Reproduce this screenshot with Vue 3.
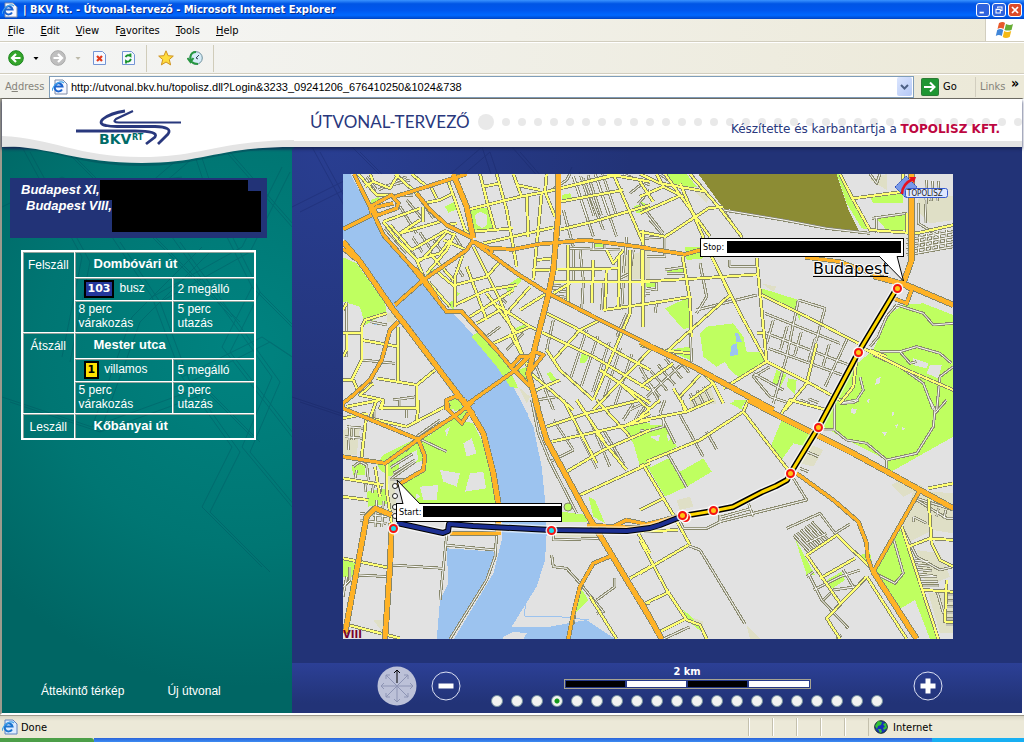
<script setup>
import { ref } from 'vue'

const address = ref('http://utvonal.bkv.hu/topolisz.dll?Login&3233_09241206_676410250&1024&738')
const zoomLevel = ref(4)
const menus = ['File', 'Edit', 'View', 'Favorites', 'Tools', 'Help']
const accessKeys = [0, 0, 0, 1, 0, 0]

// n parallel street segments, each shifted by (dx, dy)
const hatch = (x1, y1, x2, y2, dx, dy, n) =>
  Array.from({ length: n }, (_, i) => `M${x1 + dx * i} ${y1 + dy * i} ${x2 + dx * i} ${y2 + dy * i}`).join('')

// The city map is kept in four sheets, each drawn at three units per map pixel
const sheets = [
  {
    at: 'translate(340 170) scale(.33333)',
    water: 'M9 12H32L95 135 135 200 215 290 320 430 340 430 400 495 470 565 520 650 565 735 385 735 200 480 160 410 9 205Z',
    sand: 'M845 260 930 240 930 330 850 325ZM535 650 570 680 560 700ZM140 430 165 430 165 460 140 455Z',
    green: 'M9 262 50 280 135 400 140 430 75 465 60 410 9 395ZM395 500 410 488 450 515 500 580 535 655 510 650 470 590ZM392 118 445 112 458 182 405 188ZM315 110 345 94 352 118 325 128ZM92 90 118 80 120 95 95 100ZM255 315 280 295 285 310 265 325ZM495 350 540 320 550 325 515 365 510 380ZM525 475 560 460 565 475 535 488ZM665 75 690 70 700 92 665 96ZM880 110 910 98 920 130 890 130ZM755 215 790 215 790 232 760 232ZM725 550 740 542 750 555 735 580 718 580ZM620 610 632 605 650 630 635 635ZM530 600 565 590 565 640ZM325 400 340 390 345 430ZM325 690 350 682 365 712 330 720ZM345 365 360 370 345 385Z',
    land: 'M405 135 420 125 440 135 442 165 425 175 408 160Z',
    pond: 'M102 455H118V466H102Z',
    minor: 'M20 395V560M65 570 165 580M700 20 760 200M730 25 790 180M765 12 830 200M670 120 700 230M850 12 930 45M870 70 920 30M860 200 850 310M880 240 870 310 840 325M690 235 840 240M720 240 730 330M140 50 210 30M115 60 200 20M150 80 220 75M135 175 200 250M200 90 250 150M180 110 230 190M250 100 280 145M590 690 650 680M640 450 620 540M860 430 830 500M700 240V330M580 570 610 640M440 500 480 470M480 380 500 400M140 465 90 455M160 690 230 680M895 100 930 60M915 340V380M600 620 640 720M915 370H930M345 200 370 240M280 210 310 250M550 490 500 540M350 290 370 320M80 20 110 60M635 60 680 30 690 12M640 125H660M640 210H660M760 210V240M795 210V240'
      + hatch(740, 480, 690, 630, 34, 18, 5) + hatch(640, 345, 680, 350, 0, 16, 3) + hatch(195, 215, 225, 260, 22, -14, 3) + hatch(700, 20, 740, 140, 22, -2, 5) + hatch(730, 340, 725, 420, 60, 0, 3),
    yellow: 'M55 12 110 75 160 75M75 50 100 35 90 12M100 35 150 55 175 12M165 12 230 70 250 100 300 90 340 70M215 12 255 45M270 45 290 85M325 35 345 90 375 180 395 200M250 110V155M130 155 240 115M130 155 180 220 230 270 255 330M180 190 300 155M150 165 215 240M185 220 235 275 250 265 320 185 345 195M215 240 320 180M240 150 180 190M230 270 300 250 330 210M345 190 320 240 260 310M400 230 480 390 550 560M370 250 345 320V410M380 290 440 450M345 345 440 320 480 275M345 405 440 360 530 345M390 440 520 360M265 335 330 410M285 300 345 350M420 12 440 90 465 180M380 120 540 80 620 65 840 12M470 12 500 120 530 290M530 45 600 60M430 50 480 40M400 185 520 175M430 220 650 170M520 12 545 80M560 75 565 200M605 70 580 330M620 12 615 65 645 140M660 95 850 60M655 180 760 155 930 105M660 55 830 12M800 12 930 35M820 12 910 220M590 270 640 265M575 300 840 295M640 335H930M685 225V400M760 270 755 400M800 240 820 280 850 240M800 300 795 420M838 260 835 410M870 240V430L760 690M905 240 910 450M790 420 930 400M640 370 690 340M620 430 700 470 820 540 930 600M540 420 620 370M500 430 570 350M440 370 530 490M460 520 570 470 760 560 930 660M410 460 480 420M510 490 570 600M470 405 570 470M620 540 660 600 760 690M560 600 620 650 700 720M590 660 660 630M640 570 720 480 780 450M760 720 930 540M780 600 930 700M840 640 930 720M65 470 75 450 140 430M65 470V570L35 630H9M9 490H65M65 510 175 530M175 470V640M110 625 230 645 285 600M230 645V720M100 640 60 675 130 690 125 720M40 630 55 665M290 140 320 165 350 160M270 250 340 330M310 210 380 240M20 400 9 420M9 560 20 540V490',
    orange: 'M42 12 100 130 130 195 215 290 320 425H365L410 475 475 545 520 600 570 650M9 178 95 135M165 80 260 50 380 12M230 70 270 120 320 165 400 205M400 210 380 240 250 330 165 405M400 215 450 235 520 238 600 222 740 210 930 235M455 235V250M400 215 530 310 625 370 780 450 930 525M9 235 50 270M175 455 150 480 125 570 90 630 40 675 9 700V720M385 700 520 605 560 565 585 545 610 555 570 605M95 130 90 110 155 75 175 100 170 115 100 140M105 112 160 100M320 720V690L345 680 375 690M515 590 540 560 570 560M530 605 560 640 580 650M210 285 240 310 290 380',
    major: 'M340 12 380 110 400 205M655 12V130L640 300 625 375 580 550 565 610 595 720M9 215 60 275 160 420 200 470 400 735M95 110 110 140',
  },
  {
    at: 'translate(640 170) scale(.33333)',
    sand: 'M840 60 940 80 940 150 870 160 830 120ZM150 680 210 650 230 700 150 715ZM365 340 410 350 400 365ZM690 30 740 12 740 60ZM160 60 210 70 200 100Z',
    green: 'M365 355 475 390 465 418 370 385ZM180 490 200 470 280 460 310 500 320 545 370 545 380 580 300 625 270 600 255 575 230 590 190 560ZM750 430 790 405 850 400 940 435V730H570L640 590 700 540ZM690 80 790 65V100H700ZM705 140 800 130V180H740ZM75 415 150 380 155 470 130 478ZM80 12H140L170 50 100 52ZM0 90 40 120 0 130ZM410 600 440 615 420 655 395 645ZM445 625 470 630 465 675 440 650ZM80 540 150 530V570ZM135 230H180L190 265 140 270ZM590 12 605 12 650 100 690 180 665 175 620 100ZM80 295H135V308H80ZM15 338H50V350H15ZM300 690 310 720 270 700ZM470 430 485 435 478 450Z',
    pond: 'M285 488 295 490 305 515 290 518ZM275 525 290 520 295 555 270 558Z',
    land: 'M820 565 865 580 860 595 820 585ZM870 585 905 585 895 625 860 610ZM710 625 722 620 720 640 705 645ZM680 690 690 685 685 700Z',
    olive: 'M175 12 250 115 660 190 625 120 590 12Z',
    minor: 'M0 100 70 190M250 120 430 150 560 175 690 190M15 205 75 200V260H20M180 280 200 380 170 430M270 270V290H355M170 420 350 375M475 390 440 560 400 700M475 390 555 415 510 580M375 430 600 520M380 490 640 590M385 535 620 620M340 610 430 660M620 510 555 650M695 145 800 130M710 140V190M835 100V160L900 200M150 470 155 575M0 590 60 700M20 680 140 570M45 430 50 400H0M75 300 140 290M770 405 850 430 880 465 940 460M770 405 740 440 715 500 690 530M720 545 780 545 830 530 900 550 935 580M780 545 810 580 830 575M700 555 780 590 850 640 880 720M660 620 670 660 650 690 600 700M940 590 900 620 890 720M85 30 60 12M30 150 65 190M250 120 310 210M690 12 710 40 720 12M390 590 340 620 390 680 450 700M830 70 860 65 855 160M20 355 50 360V335M80 310H135'
      + hatch(800, 210, 940, 185, 0, 15, 4) + hatch(840, 195, 835, 250, 20, -4, 5) + hatch(10, 620, 60, 680, 22, -18, 5) + hatch(400, 450, 380, 520, 42, 18, 5) + hatch(150, 670, 170, 710, 20, -10, 3) + hatch(860, 30, 855, 90, 18, 2, 3),
    yellow: 'M0 12 60 40 200 65M0 80 70 50 50 12M0 130 125 75M75 12 210 200M150 12 240 115 305 200M120 40 215 260 300 430 380 575M0 185 75 200 205 115 250 110M70 50 130 80M0 35 40 95M125 245 150 390 155 500M350 265 380 575M0 335 180 325 355 313M0 405 155 380M10 180V470M80 545 270 375 230 290M365 375 500 440 655 520M600 12 640 90 690 180 830 190 940 165M640 85 790 65V12M380 575 250 655M380 575 510 640 600 690M530 520 500 640 435 720M350 490H375M150 690 220 640 180 600M120 680 180 615M0 525 60 540 150 550M650 560 640 650 600 700M660 530 720 560 800 600 940 660M690 540 740 560M0 650 100 580M800 190V130M220 640 250 700M100 655 140 720',
    orange: 'M0 232 135 253 180 240M495 262 600 275 720 320M760 385 800 400 815 360 790 345',
    major: 'M700 318 800 345 940 405M815 12V270L790 340M0 515 160 590 400 720',
  },
  {
    at: 'translate(340 400) scale(.33333)',
    water: 'M390 0H540L580 80 605 200 615 300 620 400 615 480 590 560 540 640 515 680 630 680 740 660 830 720H340L400 620 460 520 485 420V310L460 200 430 90ZM320 445 465 455 455 510 400 600 330 720H290L300 600 325 550Z',
    sand: 'M9 90 60 80 50 165 9 165ZM140 200H160L170 330 155 340ZM100 660H130V700ZM640 395 780 390 770 410 650 412ZM800 500 830 470 810 490Z',
    green: 'M270 105 340 55 400 70 430 130 460 220 465 310H240L180 250 250 210 260 180 240 120ZM110 190 130 165 240 110 250 180 180 210 150 230 120 210ZM80 275 140 265 150 310 85 320ZM35 200 55 190 75 200V225H40ZM9 480 50 490 40 530H9ZM720 560 745 600 705 640ZM850 90 880 70 930 70V210L900 200 880 130ZM665 335 740 345V365H665ZM745 290 765 300 795 370 760 350ZM325 0H365V25L345 35ZM350 40 385 30 380 60 360 62Z',
    land: 'M370 130 395 115 410 160 380 170ZM300 210 360 220 350 260 310 245ZM390 220 430 215 438 265 375 275ZM240 260 295 255 290 300 250 300ZM490 710 520 695 560 700 550 717 490 717ZM180 180 230 150 235 180 175 215ZM315 90 330 80 320 110ZM230 280 240 290 225 300Z',
    minor: 'M30 75 25 150M245 120 320 155M155 235 225 185M195 155 230 110 300 60M150 240H200M155 495 310 505M55 525 145 530M320 405 300 600M315 435 465 450M470 405 465 470 440 540 330 717M575 0 595 100 630 185 710 340M710 85 770 205M750 60 810 200M790 90 850 190M640 400V420L780 415M635 465 640 500 680 505 720 550 790 635 770 640M770 600 825 560V535M9 590 20 530M705 640 700 670M640 60 700 150M870 30 930 0M20 80 75 85M15 110 70 115M40 85V120M10 560 30 540V500M850 60 880 12M630 185 700 150M40 200 60 185 80 195 85 240M180 0V30M200 20V55M105 30V60M50 210 45 235M900 30 880 70'
      + hatch(80, 240, 75, 275, 22, 4, 3) + hatch(110, 300, 105, 380, 20, 2, 2) + hatch(60, 340, 140, 350, 0, 20, 2) + hatch(160, 220, 225, 180, -8, -18, 2),
    yellow: 'M80 40 65 170M9 55 80 40M130 0 120 25 235 25 230 60M140 190V270L155 370M9 235 130 255M9 475 155 505M680 215 790 150 930 90M670 0 770 190M770 0 870 110M620 80 740 40 900 0M635 125 930 60M720 285 930 190M750 590 830 717M870 535 930 500M895 400 930 460M25 675 180 715M120 0 20 20M110 0 90 55 200 80 330 12M235 0V30M850 80 930 40M770 100 860 210M710 0 790 120M915 610H930M105 200 120 290M9 290 85 300',
    orange: 'M9 25 235 118M9 170 135 190 235 118 355 40 400 5M235 118 255 170 250 210 165 260M475 400H330M320 0 325 30 365 70 385 40M820 465 760 490 720 560 700 640 685 717M740 375 930 385M820 380 860 360 930 375',
    major: 'M15 700 80 350 105 325 155 345M155 370 150 500 135 717M370 0 430 100 460 220 475 310V405M585 0 620 120 740 340 930 655',
  },
  {
    at: 'translate(640 400) scale(.33333)',
    sand: 'M820 270 940 280V400L880 390 800 430 790 380ZM830 450 900 460 930 530 860 560ZM865 580H940V700H900ZM755 255 790 235 850 260 790 290ZM505 130 550 150 520 200 480 190ZM110 300 150 290 160 320 120 330ZM150 650 190 665 190 700ZM320 675 360 717 330 717Z',
    green: 'M0 75H80L110 140 20 190 0 180ZM25 205 85 175 120 215 190 175 215 215 140 260 75 290ZM425 60 535 110 500 140 460 130 425 180 390 145ZM575 20 600 0H940V110L745 220 740 180 620 120 550 80ZM465 415 525 525H500ZM650 470 690 455 700 510 670 490ZM705 520 760 420 785 385 895 717H870L825 600 775 630ZM560 540 605 515 615 540 575 567ZM130 630 155 650 190 700 140 660ZM280 0H320L300 30ZM515 430 525 428 528 440Z',
    land: 'M635 25 650 28 645 42 632 38ZM755 35 765 38 758 50ZM765 75 775 72 770 85ZM725 95 740 97 735 110ZM785 80 795 85 788 92ZM30 110 60 105 55 125ZM80 100 95 110 85 125Z',
    minor: 'M60 40 75 0M120 45 190 170M200 95 230 148M0 100 70 80V50M85 165 140 262M60 40 105 130M120 365 130 385 200 385 240 365 500 300 460 235M240 345V370M240 352 335 325M325 310 340 350M145 437 180 450 315 672M500 155 535 170M480 205 505 215M440 385 540 340 585 400M585 400 630 372M500 530 520 515M505 520 545 600 625 685M520 570 600 530 660 510M610 510 645 570M550 600 580 570 650 560M583 10V90L620 120 680 130 740 180 830 160 880 80 885 30 870 0M740 180V215M550 90H583M885 40 920 0M705 520 765 550 790 520 760 415M830 295 940 330M830 300 920 355H940M820 350 860 370M820 350V365M890 570 910 640M790 390 830 470 900 510 940 500M560 400 500 430M70 717 150 680M590 717 605 705M600 10 640 8 655 0M20 12 0 40M0 90 20 95'
      + hatch(460, 405, 510, 460, 11, -8, 6) + hatch(820, 480, 865, 485, 5, 14, 4) + hatch(840, 530, 890, 530, 3, 14, 3) + hatch(480, 0, 510, 12, 25, -4, 2) + hatch(918, 585, 940, 585, 0, 18, 6) + hatch(895, 325, 890, 350, 22, 6, 2),
    yellow: 'M0 62 140 35 220 0M20 185 180 120 310 35 325 0M310 35 460 230M0 200 10 195 100 345 150 435M0 330 70 295M0 520 145 435M0 420 80 570 140 660 180 675 200 717M15 610 90 575M60 695 140 655M500 465 590 405 700 510M500 465 600 610M540 535 645 475M680 530 560 655 600 717M680 530 800 717M425 40 450 0 560 30M785 380 895 717M805 440 870 415 940 420M940 250 865 265M865 290 875 430 900 480 940 500M850 570 940 575M920 540 915 665H940M0 395 115 390M125 0 135 35M60 0 0 50',
    orange: 'M470 220 580 300 655 365 680 430 682 470 700 520M840 270 700 515M0 378 128 345',
    major: 'M325 0 420 50 540 110 640 160 750 220 840 270 940 325M700 515 830 717M0 600 65 717',
  },
]
const areas = ['water', 'sand', 'green', 'land', 'pond', 'olive']
const roads = ['minor casing', 'minor', 'yellow casing', 'yellow', 'orange casing', 'major casing', 'orange', 'major']

const blueRoute = 'M397 523 443 533 448 531 449 524 473 526 551 530 627 531 650 528 660 525 683 516'
const yellowRoute = 'M683 516 713 511 733 507 762 492 776 486 787 480 790 474 818 428 858 353 897 288'
const stops = [[393, 528, 1], [551, 530, 1], [685, 517], [682, 515], [713, 510], [790, 473], [818, 427], [858, 352], [897, 288]]

const legs = [
  { action: 'Felszáll', place: 'Dombóvári út', line: '103', kind: 'busz', count: '2 megálló', wait: '8 perc', ride: '5 perc', tone: 'bus' },
  { action: 'Átszáll', place: 'Mester utca', line: '1', kind: 'villamos', count: '5 megálló', wait: '5 perc', ride: '9 perc', tone: 'tram' },
]

const streets = 'M0 60 60 30 120 60 190 0M20 0 80 110 60 210M190 0 210 60 250 140 290 180M110 90 150 150 240 100 280 20M150 150 180 230 260 190 290 210M170 90 270 230 240 300 290 360M100 40 230 170M200 100 130 170 90 280M0 250 90 280 200 240 250 290M180 230 230 300 200 360 260 420M60 0 100 40 180 30M220 0 290 80M250 140 220 200 290 290'
</script>

<template>
  <div class="window">
    <header class="titlebar">
      <svg class="ie" viewBox="0 0 16 16" aria-hidden="true"><path d="M3 1h8l4 4v10H3z" fill="#f7f8ff" stroke="#7c8ba9" /><path d="M10 10.500A4 4 0 1 1 10.500 7.500H3.500" fill="none" stroke="#1c64cf" stroke-width="2" /><path d="M0 12C1 5 9 1 12 4" fill="none" stroke="#41a3ec" stroke-width="1.200" /></svg>
      <h1>| BKV Rt. - Útvonal-tervező - Microsoft Internet Explorer</h1>
      <button class="wb" aria-label="Minimize"><svg viewBox="0 0 14 14"><path d="M3 10h5" stroke="#fff" stroke-width="2" /></svg></button>
      <button class="wb" aria-label="Restore"><svg viewBox="0 0 14 14"><path d="M5.500 5V3.500h5v4H9M3.500 6h5v4.500h-5zM3.500 6.500h5M5.500 3.500h5" fill="none" stroke="#fff" stroke-width="1.200" /></svg></button>
      <button class="wb close" aria-label="Close"><svg viewBox="0 0 14 14"><path d="m3.500 3.500 7 7m0-7-7 7" stroke="#fff" stroke-width="2" /></svg></button>
    </header>

    <nav class="menubar">
      <button v-for="(m, i) in menus" :key="m">{{ m.slice(0, accessKeys[i]) }}<u>{{ m[accessKeys[i]] }}</u>{{ m.slice(accessKeys[i] + 1) }}</button>
      <span class="flag">
        <svg viewBox="0 0 20 18" aria-hidden="true"><path d="M4 2q4-2 6 0L8.500 8q-3-2-6 0z" fill="#e8592b" /><path d="M11 3q4 2 7 0l-1.500 6q-4 1-7 0z" fill="#67ad35" /><path d="M2.200 9q3-2 6 0L6.800 15q-3-2-6 0z" fill="#4086d8" /><path d="M9.200 10q3 2 7 0l-1.500 6q-4 2-7 0z" fill="#f5b916" /></svg>
      </span>
    </nav>

    <div class="toolbar">
      <button aria-label="Back"><svg viewBox="0 0 16 16"><circle cx="8" cy="8" r="7.300" fill="#35a62b" stroke="#18831b" /><path d="M12.500 8H4.500M8 4 4 8l4 4" fill="none" stroke="#fff" stroke-width="2.200" /></svg></button>
      <button class="drop" aria-label="Back history"><svg viewBox="0 0 5 3"><path d="M0 0h5L2.500 3z" /></svg></button>
      <button aria-label="Forward"><svg viewBox="0 0 16 16"><circle cx="8" cy="8" r="7.300" fill="#bfbfbf" stroke="#a9a9a9" /><path d="M3.500 8h8M8 4l4 4-4 4" fill="none" stroke="#fff" stroke-width="2.200" /></svg></button>
      <button class="drop" aria-label="Forward history"><svg viewBox="0 0 5 3"><path d="M0 0h5L2.500 3z" fill="#bdbaaa" /></svg></button>
      <button class="gap" aria-label="Stop"><svg viewBox="0 0 16 16"><path d="M2.500 1.500h9l3 3v10h-12z" fill="#f5f8ff" stroke="#7395d4" /><path d="m6 6 5 5m0-5-5 5" stroke="#e23a1b" stroke-width="2.200" /></svg></button>
      <button class="gap" aria-label="Refresh"><svg viewBox="0 0 16 16"><path d="M2.500 1.500h9l3 3v10h-12z" fill="#f5f8ff" stroke="#7395d4" /><path d="M5.500 7q2-3 5-1V3.500M11 9q-2 4-5 2v2.500" fill="none" stroke="#18932b" stroke-width="1.800" /></svg></button>
      <i class="sep" />
      <button aria-label="Favorites"><svg viewBox="0 0 16 16"><path d="m8 .8 2.100 4.900 5.200.4-4 3.400 1.300 5.400L8 12l-4.600 2.900 1.300-5.400-4-3.400 5.200-.4z" fill="#ffdc3d" stroke="#cf9321" /></svg></button>
      <button class="gap" aria-label="History"><svg viewBox="0 0 16 16"><circle cx="9" cy="8" r="6.300" fill="#d5ecf7" stroke="#70909c" /><path d="M12 5 9 8l2 1" fill="none" stroke="#345" /><path d="M11 14Q3 14 3.500 7 4 2 9 2M.5 8l3 4 3-4" fill="none" stroke="#279741" stroke-width="2" /></svg></button>
      <i class="sep" />
    </div>

    <form class="addressbar" @submit.prevent>
      <label for="address">A<u>d</u>dress</label>
      <span class="field">
        <svg class="ie" viewBox="0 0 16 16" aria-hidden="true"><path d="M3 1h8l4 4v10H3z" fill="#f7f8ff" stroke="#7c8ba9" /><path d="M10 10.500A4 4 0 1 1 10.500 7.500H3.500" fill="none" stroke="#1c64cf" stroke-width="2" /><path d="M0 12C1 5 9 1 12 4" fill="none" stroke="#41a3ec" stroke-width="1.200" /></svg>
        <input id="address" v-model="address" type="text" spellcheck="false">
        <button type="button" class="open" aria-label="Recent addresses"><svg viewBox="0 0 9 6"><path d="m1 1 3.500 3.500L8 1" fill="none" stroke="#4d6185" stroke-width="2" /></svg></button>
      </span>
      <button class="go"><svg viewBox="0 0 18 18" aria-hidden="true"><rect x=".5" y=".5" width="17" height="17" rx="1" fill="#1f9632" stroke="#2c7a37" /><path d="M3 9h10M9 4.500 13.500 9 9 13.500" fill="none" stroke="#fff" stroke-width="2" /></svg>Go</button>
      <span class="links">Links</span>
      <button type="button" class="more" aria-label="More links">»</button>
    </form>

    <main class="page">
      <header class="banner">
        <svg class="swoosh" viewBox="0 0 292 70" aria-hidden="true">
          <path d="M0 47C50 49 75 67 140 67 200 67 215 50 292 50V42H0Z" fill="#044a58" opacity=".5" />
          <path d="M0 0H292V48C215 48 205 64 140 64 75 64 50 48 0 47Z" fill="#e4e4e4" />
          <path d="M0 0H292V41C215 42 200 58 140 58 75 58 50 39 0 37Z" fill="#fff" />
        </svg>
        <svg class="logo" viewBox="0 0 106 38" aria-label="BKV Rt.">
          <g fill="none" stroke="#29387d">
            <path d="M50 2Q36 4 28 10 23 15 31 16.500 35 17.500 42 17.500H80Q98 18 93 25L83 35" stroke-width="2.800" />
            <path d="M58 2 41 10Q37 13.500 44 13.500H106" stroke-width="2.200" />
            <path d="M1 22H60Q84 22 80 28L71 35" stroke-width="2.800" />
          </g>
          <text x="24" y="35" class="logo-name">BKV</text>
          <text x="57" y="31" class="logo-rt">RT</text>
        </svg>
        <h2>ÚTVONAL-TERVEZŐ</h2>
        <svg class="beads" width="100%" height="18" aria-hidden="true">
          <defs><pattern id="bead" x="20" width="16" height="18" patternUnits="userSpaceOnUse"><circle cx="8" cy="9" r="4" fill="#e9e9e9" /></pattern></defs>
          <circle cx="8" cy="9" r="8" fill="#e9e9e9" /><rect x="20" width="100%" height="18" fill="url(#bead)" />
        </svg>
        <p class="credit">Készítette és karbantartja a <a href="#">TOPOLISZ KFT.</a></p>
      </header>

      <aside class="side">
        <svg class="texture" viewBox="0 0 290 440" aria-hidden="true"><path :d="streets" /><path :d="streets" transform="translate(8 5)" /></svg>
        <section class="trip">
          <div class="from"><span>Budapest XI,</span><b /></div>
          <div class="to"><span>Budapest VIII,</span><b /></div>
        </section>
        <table>
          <colgroup><col class="c-action"><col class="c-line"><col></colgroup>
          <tbody v-for="l in legs" :key="l.action">
            <tr class="place"><th rowspan="3" scope="rowgroup">{{ l.action }}</th><td colspan="2">{{ l.place }}</td></tr>
            <tr class="line"><td><span class="badge" :class="l.tone">{{ l.line }}</span><span class="kind">{{ l.kind }}</span></td><td>{{ l.count }}</td></tr>
            <tr class="time"><td>{{ l.wait }}<br>várakozás</td><td>{{ l.ride }}<br>utazás</td></tr>
          </tbody>
          <tbody><tr class="place"><th scope="row">Leszáll</th><td colspan="2">Kőbányai út</td></tr></tbody>
        </table>
        <footer><a href="#">Áttekintő térkép</a><a href="#">Új útvonal</a></footer>
      </aside>

      <section class="stage">
        <svg class="texture" viewBox="0 0 290 440" aria-hidden="true"><path :d="streets" /><path :d="streets" transform="translate(8 5)" /></svg>
        <svg class="map" viewBox="343 174 610 465" role="img" aria-label="Budapest">
          <rect x="343" y="174" width="610" height="465" fill="#e2e2e2" />
          <g shape-rendering="crispEdges">
            <g v-for="a in areas" :key="a"><path v-for="(s, i) in sheets" :key="i" :transform="s.at" :d="s[a]" :class="a" /></g>
            <path d="M524 616 562 617 589 620M524 616 527 595 535 575" fill="none" stroke="#9cc3ef" />
            <g v-for="r in roads" :key="r"><path v-for="(s, i) in sheets" :key="i" :transform="s.at" :d="s[r.split(' ')[0]]" class="road" :class="r" /></g>
          </g>
          <circle cx="568" cy="507" r="4" fill="#bfff60" stroke="#86866a" />
          <text x="343" y="638" class="district">VIII</text>
          <g class="route">
            <path :d="blueRoute" class="halo" /><path :d="yellowRoute" class="halo" />
            <path :d="blueRoute" class="edge" /><path :d="blueRoute" class="bus-line" />
            <path :d="yellowRoute" class="edge" /><path :d="yellowRoute" class="tram-line" />
          </g>
          <circle v-for="y in [486, 496, 507, 516]" :key="y" cx="395" :cy="y" r="2.500" fill="#fff" stroke="#222" />
          <g v-for="(s, i) in stops" :key="'s' + i">
            <circle :cx="s[0] + .5" :cy="s[1] + .5" r="6" fill="#fff" opacity=".85" />
            <circle :cx="s[0] + .5" :cy="s[1] + .5" r="3.500" :fill="s[2] ? '#19dbe9' : '#ffc414'" stroke="#f51212" stroke-width="2" />
          </g>
          <text x="813" y="274" class="city">Budapest</text>
          <path d="M813 276.500H888" stroke="#000" />
          <g class="callout">
            <rect x="700.500" y="238.500" width="203" height="18" /><path d="M879 256 903.500 281 897 256" /><path d="M880.500 256H896.500" class="erase" />
            <rect x="727" y="241" width="174" height="12" class="hidden-name" /><text x="703" y="250">Stop:</text>
            <rect x="396.500" y="503.500" width="165" height="18" /><path d="M403 504 397 480 420 504" /><path d="M404 504H419" class="erase" />
            <rect x="423" y="506" width="138" height="11" class="hidden-name" /><text x="399" y="515">Start:</text>
          </g>
          <g><path d="m895 187 11-11 11 11-11 11z" fill="#7899e8" stroke="#2446bd" stroke-dasharray="2 1" /><path d="M902 194Q902 184 913 179" fill="none" stroke="#e51122" stroke-width="2.500" /><path d="m909 177 7 0-2 6z" fill="#e51122" /><rect x="905.500" y="188.500" width="42" height="9" rx="2" fill="#dfe7ff" stroke="#3559cf" /><text x="907" y="196" class="topolisz">TOPOLISZ</text></g>
        </svg>

        <div class="controls">
          <svg class="compass" viewBox="0 0 40 40" role="img" aria-label="Irány">
            <circle cx="20" cy="20" r="19.500" fill="#bcc1d8" />
            <g fill="none" stroke="#8d94b4"><path d="M4 20H36M20 20V36M9 9 31 31M31 9 9 31M7 17l-3 3 3 3M33 17l3 3-3 3M17 33l3 3 3-3M9 13V9h4M27 9h4v4M9 27v4h4M31 27v4h-4" /><path d="M20 17V4M17 7l3-3 3 3" stroke="#000" /></g>
          </svg>
          <button class="zoom" aria-label="Kicsinyítés"><svg viewBox="0 0 30 30"><circle cx="15" cy="15" r="14" fill="none" stroke="#dbe0f3" /><path d="M7.500 15h15" stroke="#fff" stroke-width="5" /></svg></button>
          <div class="scale">
            <strong>2 km</strong>
            <span class="bar"><i /><i /><i /><i /></span>
            <div class="levels"><input v-for="n in 20" :key="n" v-model="zoomLevel" type="radio" name="zoom" :value="n" :aria-label="'Nagyítás ' + n"></div>
          </div>
          <button class="zoom" aria-label="Nagyítás"><svg viewBox="0 0 30 30"><circle cx="15" cy="15" r="14" fill="none" stroke="#dbe0f3" /><path d="M7.500 15h15M15 7.500v15" stroke="#fff" stroke-width="5" /></svg></button>
        </div>
      </section>
    </main>

    <footer class="status">
      <svg class="ie" viewBox="0 0 16 16" aria-hidden="true"><path d="M3 1h8l4 4v10H3z" fill="#dcebff" stroke="#5f82c0" /><path d="M10 10.500A4 4 0 1 1 10.500 7.500H3.500" fill="none" stroke="#1c74cf" stroke-width="2" /><path d="M0 12C1 5 9 1 12 4" fill="none" stroke="#41a3ec" stroke-width="1.200" /></svg>
      <span class="done">Done</span>
      <i v-for="n in 5" :key="n" class="cell" />
      <span class="zone"><svg viewBox="0 0 14 14" aria-hidden="true"><circle cx="7" cy="7" r="6.300" fill="#1731b8" stroke="#15331c" /><path d="M1 6 4 1l4 1-1 3-3 1-1 3zM9 4l3-1 1 5-3 2-1-2 2-1zM4 9l3 0 1 3-2 1z" fill="#34c234" /></svg>Internet</span>
    </footer>
    <div class="taskbar"><i /><b /><em /></div>
  </div>
</template>

<style scoped>
* { box-sizing: border-box; }
.window { display: flex; flex-direction: column; min-height: 100vh; background: #ece9d8; color: #000; font: 11px "DejaVu Sans Condensed", "DejaVu Sans", sans-serif; }
button { margin: 0; padding: 0; border: 0; background: none; color: inherit; font: inherit; }
svg { display: block; }
h1, h2, p { margin: 0; }
a { color: inherit; text-decoration: none; }
.ie { flex: none; width: 16px; height: 16px; }
.titlebar { display: flex; align-items: center; gap: 2px; height: 19px; padding: 0 2px; background: linear-gradient(#3a93ff, #0055e5 20%, #0057ee 55%, #0068ff 80%, #0044c4); }
.titlebar h1 { flex: 1; padding-left: 3px; color: #fff; font: bold 11px "DejaVu Sans Condensed", sans-serif; text-shadow: 1px 1px #0a2f8c; white-space: nowrap; }
.wb { width: 14px; height: 14px; border: 1px solid #fff; border-radius: 3px; background: #2f63dd; }
.close { background: #dc4a28; }
.menubar { display: flex; align-items: center; gap: 16px; height: 23px; padding-left: 8px; border-bottom: 1px solid #d2cebf; background: linear-gradient(90deg, #f6f7f8, #ece9d8); }
.flag { display: flex; align-items: center; justify-content: center; width: 39px; height: 100%; margin-left: auto; border-left: 1px solid #d2cebf; background: #fff; }
.flag svg { width: 20px; height: 18px; }
.toolbar { display: flex; align-items: center; height: 32px; padding-left: 8px; border-top: 1px solid #fff; border-bottom: 1px solid #d2cebf; background: linear-gradient(90deg, #f4f5f5, #ece9d8); }
.toolbar button { width: 16px; }
.toolbar .drop { width: 26px; padding: 0 11px 0 9px; }
.toolbar .drop svg { width: 6px; height: 3px; }
.toolbar .gap { margin-left: 13px; }
.toolbar .drop + .gap { margin-left: -1px; }
.sep { width: 1px; height: 27px; margin: 0 11px 0 10px; background: #d0ccba; }
.addressbar { display: flex; align-items: center; height: 24px; padding-left: 5px; border-top: 1px solid #fff; background: linear-gradient(90deg, #f0f0ea, #ece9d8); }
.addressbar label { width: 44px; color: #85837a; }
.field { display: flex; flex: 1; align-items: center; height: 22px; padding: 0 1px 0 2px; border: 1px solid #7f9db9; background: #fff; }
.field input { flex: 1; min-width: 0; padding: 0 0 0 3px; border: 0; outline: 0; font: 11px "Liberation Sans", Arial, sans-serif; }
.open { display: flex; align-items: center; justify-content: center; width: 15px; height: 19px; border-radius: 2px; background: linear-gradient(135deg, #dce6fe, #b4c8f6); }
.open svg { width: 9px; height: 6px; }
.go { display: flex; align-items: center; gap: 4px; width: 61px; padding-left: 7px; }
.go svg { width: 18px; height: 18px; }
.links { width: 31px; height: 20px; padding: 3px 0 0 4px; border-left: 1px solid #d2cebf; color: #85837a; white-space: nowrap; }
.more { width: 18px; padding: 0 0 8px 5px; font-size: 14px; font-weight: bold; line-height: 14px; text-align: left; }

.page { display: grid; flex: 1; grid-template: 48px minmax(0, 1fr) / 290px minmax(0, 1fr); border: 2px solid #fff; border-top: 1px solid #716f64; border-left-color: #9d9a8d; }
.banner { position: relative; z-index: 1; display: flex; grid-column: 1 / 3; background: #fff; border-bottom: 6px solid #e4e4e4; box-shadow: 0 2px 3px #182456; }
.swoosh { position: absolute; top: 0; left: 0; width: 292px; height: 70px; }
.logo { position: relative; flex: none; width: 106px; height: 38px; margin: 10px 0 0 73px; }
.logo-name { fill: #006b68; font: bold 14px "DejaVu Sans", sans-serif; }
.logo-rt { fill: #006b68; font: bold 8px "DejaVu Sans", sans-serif; }
.banner h2 { flex: none; width: 168px; margin: 10px 0 0 129px; color: #29387d; font: 17px/26px Lato, sans-serif; white-space: nowrap; }
.beads { flex: 1; min-width: 0; margin-top: 14px; }
.credit { position: absolute; right: 22px; bottom: 3px; color: #29387d; font: 12px/18px "DejaVu Sans", sans-serif; }
.credit a { color: #bd0640; font-weight: bold; }

.side { position: relative; display: flex; flex-direction: column; padding: 31px 0 0 8px; background: radial-gradient(circle at 240px 200px, #008380, #007673 200px, #006664 340px); color: #fff; font: 12px/14px "Liberation Sans", Arial, sans-serif; }
.texture { position: absolute; top: 0; left: 0; width: 290px; height: 440px; fill: none; stroke: #003f54; opacity: .25; }
.trip { position: relative; width: 257px; height: 60px; padding-top: 2px; background: #223377; font: italic bold 13px/16px "Liberation Sans", Arial, sans-serif; white-space: nowrap; }
.from, .to { display: flex; }
.from span { width: 90px; padding: 2px 0 0 11px; }
.from b { width: 148px; height: 20px; background: #000; }
.to { margin-top: -9px; }
.to span { width: 102px; padding: 7px 0 0 16px; }
.to b { width: 149px; height: 41px; background: #000; }
table { position: relative; width: 235px; margin: 12px 0 0 11px; border: 2px solid #fff; border-collapse: collapse; table-layout: fixed; }
.c-action { width: 52px; }
.c-line { width: 98px; }
th, td { padding: 0 4px; border: 1px solid #fff; box-shadow: inset 1px 1px #91a49c; text-align: left; vertical-align: middle; }
th { padding: 6px 0 0; font-weight: normal; text-align: center; vertical-align: top; }
tr.place { height: 26px; }
tr.place td { padding-left: 19px; font-size: 13px; font-weight: bold; }
tr.line { height: 23px; }
tr.line td:first-child { padding-left: 9px; }
tr.line td + td, tr.time td + td { padding-left: 5px; }
tr.time { height: 32px; }
.badge { display: inline-block; padding: 0 2px; border: 2px solid #000; font: bold 11px/14px "DejaVu Sans", sans-serif; }
.bus { background: #24379c; }
.tram { background: #ffe100; color: #000; }
.kind { padding-left: 5px; }
.side footer { position: relative; display: flex; gap: 43px; margin-top: auto; padding: 0 0 15px 31px; }

.stage { position: relative; display: flex; flex-direction: column; background: radial-gradient(circle at 40px 0, #293e91, #223377 300px); }
.stage .texture { stroke: #101c55; }
.map { position: relative; width: 100%; max-width: 610px; margin: 27px 0 24px 51px; }
.water, .pond { fill: #9cc3ef; }
.sand { fill: #dfdfc6; }
.green { fill: #bfff60; }
.land { fill: #e2e2e2; }
.olive { fill: #8c8c34; }
.road { fill: none; stroke-linejoin: round; }
.minor { stroke: #fff; stroke-width: 3; }
.yellow { stroke: #ffff72; stroke-width: 6; }
.orange { stroke: #ffb226; stroke-width: 9; }
.major { stroke: #ffb226; stroke-width: 14; }
.casing { stroke: #86866a; }
.minor.casing { stroke-width: 9; }
.yellow.casing { stroke-width: 11; }
.orange.casing { stroke-width: 14; }
.major.casing { stroke-width: 19; }
.route { fill: none; stroke-linejoin: round; }
.halo { stroke: #fff; stroke-width: 9; opacity: .55; }
.edge { stroke: #000; stroke-width: 6; }
.bus-line { stroke: #1c2f92; stroke-width: 4; }
.tram-line { stroke: #ffd800; stroke-width: 3; }
.district { fill: #78002d; font: bold 10px "DejaVu Sans", sans-serif; }
.city { font: 16px "DejaVu Sans", sans-serif; paint-order: stroke; stroke: #fff; stroke-width: 2; }
.callout { fill: #fff; stroke: #000; }
.callout text { fill: #000; stroke: none; font: 9px "DejaVu Sans Condensed", sans-serif; }
.callout .erase { stroke: #fff; stroke-width: 2; }
.callout .hidden-name { fill: #000; stroke: none; }
.topolisz { fill: #222; font: 8px "DejaVu Sans Condensed", sans-serif; }
.controls { position: relative; display: flex; align-items: flex-start; height: 50px; margin-top: auto; padding-left: 85px; background: linear-gradient(#2c4096, #223377 80%); color: #fff; }
.compass { width: 40px; height: 40px; margin: 3px 14px 0 0; }
.zoom { width: 30px; height: 30px; margin-top: 8px; }
.scale { display: flex; flex-direction: column; align-items: center; width: 400px; margin: 2px 26px 0 26px; }
.scale strong { font: bold 11px/14px "DejaVu Sans Condensed", sans-serif; }
.bar { display: grid; grid-template-columns: repeat(4, 1fr); gap: 2px; width: 247px; height: 10px; padding: 1px; border: 1px solid #a6a392; }
.bar i { background: #000; }
.bar i:nth-child(even) { background: #fff; }
.levels { display: flex; justify-content: space-around; width: 100%; margin-top: 6px; }
.levels input { width: 12px; height: 12px; margin: 0; appearance: none; border: 1px solid #74919f; border-radius: 50%; background: #f3f3f1; }
.levels input:checked { background: radial-gradient(circle, #149a1b 2px, #f3f3f1 3px); }

.status { display: flex; align-items: center; height: 23px; padding-left: 2px; border-top: 1px solid #9d9a8d; background: linear-gradient(#d8d5c5, #ece9d8 5px); }
.done { flex: 1; padding-left: 3px; }
.cell { width: 24px; height: 18px; border-left: 1px solid #c4c0ad; box-shadow: inset 1px 0 #fff; }
.zone { display: flex; align-items: center; gap: 5px; width: 156px; height: 18px; padding-left: 5px; border-left: 1px solid #c4c0ad; }
.zone svg { width: 14px; height: 14px; }
.taskbar { display: flex; height: 4px; }
.taskbar i { width: 94px; background: #4c9f48; border-radius: 0 3px 0 0; }
.taskbar b { flex: 1; background: linear-gradient(#2a63d8, #3d8cf2); }
.taskbar em { width: 92px; background: #18aff2; }
</style>

<style>
body { margin: 0; background: #3d8cf2; }
</style>
